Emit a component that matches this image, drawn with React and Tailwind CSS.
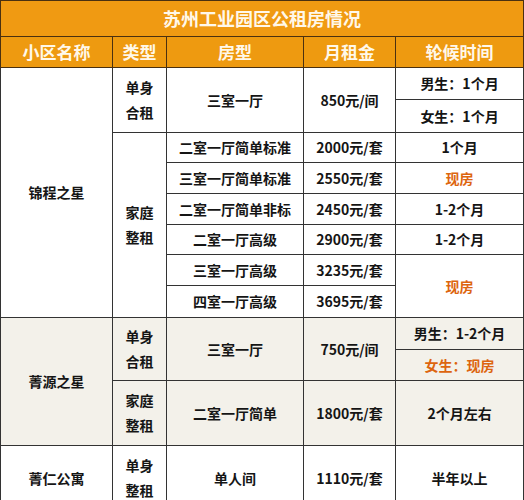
import React from "react";

const F = { fontFamily: '"Noto Sans CJK SC", "Noto Sans", sans-serif' };

function C({ children, className = "", rowSpan, colSpan }) {
  return (
    <td
      rowSpan={rowSpan}
      colSpan={colSpan}
      className={"border border-[#333333] text-center align-middle p-0 font-bold text-[14px] leading-[25px] text-[#151515] " + className}
    >
      {children}
    </td>
  );
}

function H({ children }) {
  return (
    <th className="border border-[#4a3010] bg-[#ee9a10] text-[#fff8ea] text-[17px] font-bold text-center align-middle p-0">
      {children}
    </th>
  );
}

function Two({ a, b }) {
  return (
    <>
      <div className="leading-[25px]">{a}</div>
      <div className="leading-[25px]">{b}</div>
    </>
  );
}

const O = "text-[#dd650f]";

export default function App() {
  return (
    <div className="w-[524px] h-[500px] overflow-hidden bg-white" style={F}>
      <table className="table-fixed border-collapse w-[523px]">
        <colgroup>
          <col className="w-[112px]" />
          <col className="w-[54px]" />
          <col className="w-[137px]" />
          <col className="w-[92px]" />
          <col className="w-[128px]" />
        </colgroup>
        <tbody>
          <tr className="h-[36px]">
            <td colSpan={5} className="border border-[#4a3010] bg-[#f09a12] text-[#fff8ea] text-[18px] font-bold text-center align-middle p-0">
              苏州工业园区公租房情况
            </td>
          </tr>
          <tr className="h-[31px]">
            <H>小区名称</H>
            <H>类型</H>
            <H>房型</H>
            <H>月租金</H>
            <H>轮候时间</H>
          </tr>
          <tr className="h-[32px]">
            <C rowSpan={8}>锦程之星</C>
            <C rowSpan={2}><Two a="单身" b="合租" /></C>
            <C rowSpan={2}>三室一厅</C>
            <C rowSpan={2}>850元/间</C>
            <C>男生：1个月</C>
          </tr>
          <tr className="h-[33px]">
            <C>女生：1个月</C>
          </tr>
          <tr className="h-[30px]">
            <C rowSpan={6}><Two a="家庭" b="整租" /></C>
            <C>二室一厅简单标准</C>
            <C>2000元/套</C>
            <C>1个月</C>
          </tr>
          <tr className="h-[31px]">
            <C>三室一厅简单标准</C>
            <C>2550元/套</C>
            <C className={O}>现房</C>
          </tr>
          <tr className="h-[31px]">
            <C>二室一厅简单非标</C>
            <C>2450元/套</C>
            <C>1-2个月</C>
          </tr>
          <tr className="h-[30px]">
            <C>二室一厅高级</C>
            <C>2900元/套</C>
            <C>1-2个月</C>
          </tr>
          <tr className="h-[31px]">
            <C>三室一厅高级</C>
            <C>3235元/套</C>
            <C rowSpan={2} className={O}>现房</C>
          </tr>
          <tr className="h-[32px]">
            <C>四室一厅高级</C>
            <C>3695元/套</C>
          </tr>
          <tr className="h-[32px] bg-[#f3f1ea]">
            <C rowSpan={3}>菁源之星</C>
            <C rowSpan={2}><Two a="单身" b="合租" /></C>
            <C rowSpan={2}>三室一厅</C>
            <C rowSpan={2}>750元/间</C>
            <C>男生：1-2个月</C>
          </tr>
          <tr className="h-[31px] bg-[#f3f1ea]">
            <C className={O}>女生：现房</C>
          </tr>
          <tr className="h-[65px] bg-[#f3f1ea]">
            <C><Two a="家庭" b="整租" /></C>
            <C>二室一厅简单</C>
            <C>1800元/套</C>
            <C>2个月左右</C>
          </tr>
          <tr className="h-[65px]">
            <C>菁仁公寓</C>
            <C><Two a="单身" b="整租" /></C>
            <C>单人间</C>
            <C>1110元/套</C>
            <C>半年以上</C>
          </tr>
        </tbody>
      </table>
    </div>
  );
}
